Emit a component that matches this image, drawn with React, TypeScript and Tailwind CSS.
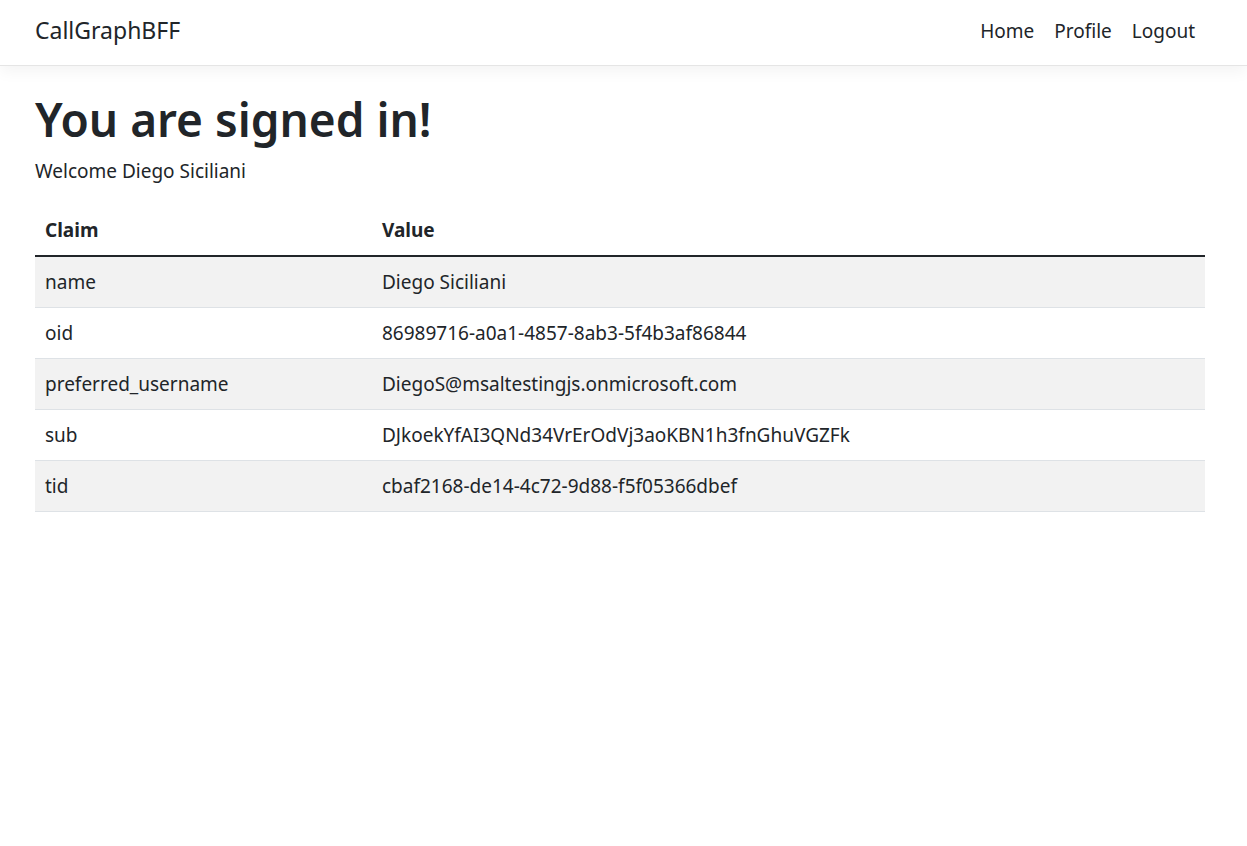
import React from 'react';

const claims: [string, string][] = [
  ['name', 'Diego Siciliani'],
  ['oid', '86989716-a0a1-4857-8ab3-5f4b3af86844'],
  ['preferred_username', 'DiegoS@msaltestingjs.onmicrosoft.com'],
  ['sub', 'DJkoekYfAI3QNd34VrErOdVj3aoKBN1h3fnGhuVGZFk'],
  ['tid', 'cbaf2168-de14-4c72-9d88-f5f05366dbef'],
];

const App: React.FC = () => {
  return (
    <div className="min-h-screen bg-white text-[#212529] font-['Noto_Sans',sans-serif]">
      {/* Navbar */}
      <header className="h-[66px] border-b border-[#e5e5e5] bg-white shadow-[0_5px_15px_rgba(0,0,0,0.05)]">
        <nav className="flex h-full items-center justify-between pl-[35px] pr-[42px] pb-[4px]">
          <a className="text-[23px] leading-none text-[#212529]">CallGraphBFF</a>
          <ul className="flex items-center text-[19px] leading-[30px]">
            <li><a className="px-[10px] text-[#212529]">Home</a></li>
            <li><a className="px-[10px] text-[#212529]">Profile</a></li>
            <li><a className="px-[10px] text-[#212529]">Logout</a></li>
          </ul>
        </nav>
      </header>

      <main className="pl-[35px] pr-[42px] pt-[23px]">
        <h1 className="text-[46px] font-semibold leading-[60px] mb-[7px]">You are signed in!</h1>
        <p className="text-[19px] leading-[30px] mb-[19px]">Welcome Diego Siciliani</p>

        <table className="w-full border-collapse text-[19px] leading-[30px]">
          <thead>
            <tr className="border-b-2 border-[#212529]">
              <th className="w-[337px] px-[10px] py-[10px] text-left font-bold">Claim</th>
              <th className="px-[10px] py-[10px] text-left font-bold">Value</th>
            </tr>
          </thead>
          <tbody>
            {claims.map(([claim, value], i) => (
              <tr
                key={claim}
                className={`border-b border-[#dee2e6] ${i % 2 === 0 ? 'bg-[#f2f2f2]' : 'bg-white'}`}
              >
                <td className="px-[10px] py-[10px]">{claim}</td>
                <td className="px-[10px] py-[10px]">{value}</td>
              </tr>
            ))}
          </tbody>
        </table>
      </main>
    </div>
  );
};

export default App;
